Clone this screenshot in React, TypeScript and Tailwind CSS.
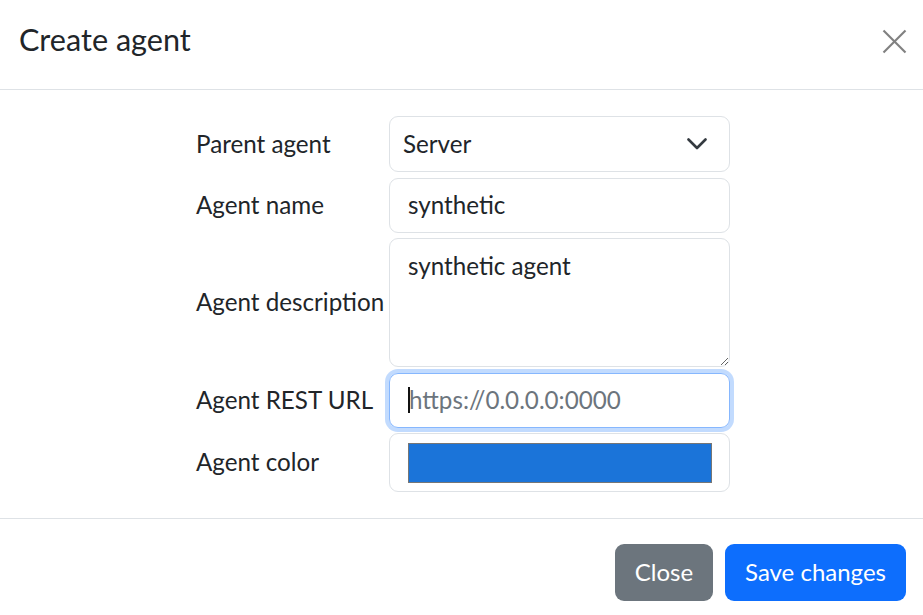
import React from "react";

export default function App() {
  return (
    <div className="w-[923px] h-[615px] bg-white text-[#212529] [font-family:Lato,sans-serif] overflow-hidden">
      {/* Header */}
      <div className="h-[90px] border-b border-[#dee2e6] flex items-start justify-between pl-[19px] pr-[16px] pt-[22px]">
        <h5 className="text-[30.6px] leading-[36px] font-normal m-0">Create agent</h5>
        <button className="mt-[7px] w-[25px] h-[25px] flex items-center justify-center">
          <svg width="25" height="25" viewBox="0 0 25 25">
            <line x1="1.5" y1="1.5" x2="23.5" y2="23.5" stroke="#808080" strokeWidth="2.2" />
            <line x1="23.5" y1="1.5" x2="1.5" y2="23.5" stroke="#808080" strokeWidth="2.2" />
          </svg>
        </button>
      </div>

      {/* Body */}
      <div className="h-[429px] border-b border-[#dee2e6] flex items-start justify-center pt-[26px]">
        <div className="grid grid-cols-[193px_341px] gap-y-[5.5px] items-center text-[24.2px] leading-[36px] ml-[3px]">
          <div className="-mt-[1px]">Parent agent</div>
          <div className="h-[56px] border border-[#dee2e6] rounded-[9px] flex items-center justify-between pl-[13px]">
            <span>Server</span>
            <svg width="20" height="12" viewBox="0 0 20 12" className="mr-[22px]">
              <polyline points="1.5,1.5 10,10 18.5,1.5" fill="none" stroke="#343a40" strokeWidth="2.6" strokeLinecap="round" strokeLinejoin="round" />
            </svg>
          </div>

          <div className="-mt-[1px]">Agent name</div>
          <div className="h-[55px] border border-[#dee2e6] rounded-[9px] flex items-center pl-[18px]">
            <span>synthetic</span>
          </div>

          <div className="-mt-[1px]">Agent description</div>
          <textarea
            className="block h-[129px] w-[341px] border border-[#dee2e6] rounded-[9px] px-[18px] py-[9px] text-[24.2px] leading-[36px] outline-none resize-y [font-family:Lato,sans-serif] text-[#212529]"
            defaultValue="synthetic agent"
          />

          <div className="-mt-[1px]">Agent REST URL</div>
          <div className="relative h-[55px] border border-[#86b7fe] rounded-[9px] shadow-[0_0_0_4px_rgba(13,110,253,0.25)] flex items-center pl-[19px]">
            <span className="text-[#6c757d]">https://0.0.0.0:0000</span>
            <span className="absolute left-[18px] top-[13px] w-[2px] h-[26px] bg-[#111]" />
          </div>

          <div className="-mt-[1px]">Agent color</div>
          <div className="h-[59px] border border-[#dee2e6] rounded-[9px] flex items-center pl-[18px]">
            <div className="w-[304px] h-[40px] bg-[#1b74d9] border border-[#767676]" />
          </div>
        </div>
      </div>

      {/* Footer */}
      <div className="flex justify-end items-start gap-[12px] pt-[25px] pr-[17px]">
        <button className="h-[57px] w-[98px] rounded-[9px] bg-[#6c757d] text-white text-[24px] leading-[36px] pb-[2px]">Close</button>
        <button className="h-[57px] w-[181px] rounded-[9px] bg-[#0d6efd] text-white text-[24px] leading-[36px] pb-[2px]">Save changes</button>
      </div>
    </div>
  );
}
